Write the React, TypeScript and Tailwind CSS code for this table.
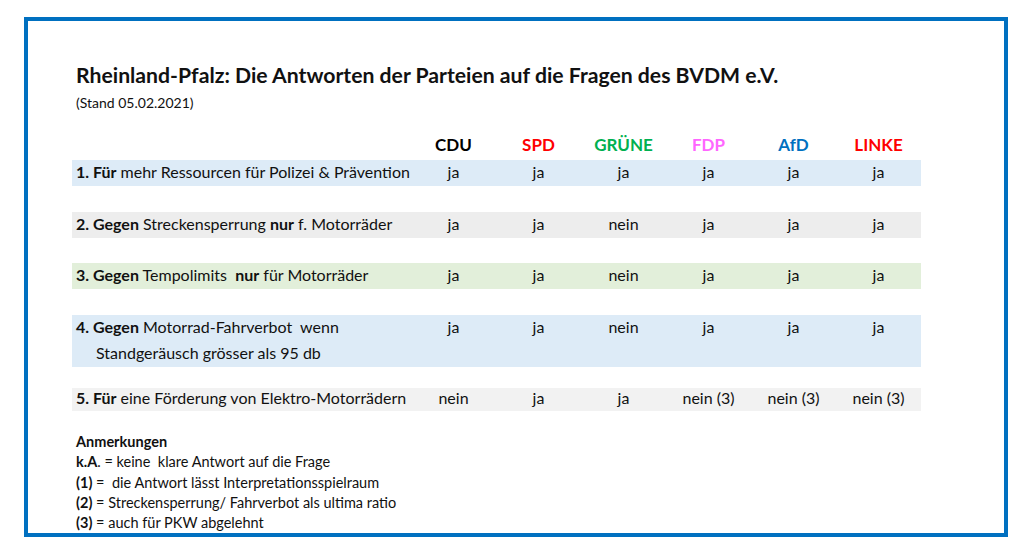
import React from "react";

type Row = {
  label: React.ReactNode;
  second?: string;
  answers: string[];
  bg: string;
  h: string;
  cell: string;
};

const parties = [
  { name: "CDU", color: "text-black" },
  { name: "SPD", color: "text-[#ff0000]" },
  { name: "GRÜNE", color: "text-[#00b050]" },
  { name: "FDP", color: "text-[#ff66ff]" },
  { name: "AfD", color: "text-[#0070c0]" },
  { name: "LINKE", color: "text-[#ff0000]" },
];

const rows: Row[] = [
  {
    label: (
      <>
        <b>1. Für</b> mehr Ressourcen für Polizei &amp; Prävention
      </>
    ),
    answers: ["ja", "ja", "ja", "ja", "ja", "ja"],
    bg: "bg-[#ddebf7]",
    h: "mt-0 h-[26px]",
    cell: "h-[26px]",
  },
  {
    label: (
      <>
        <b>2. Gegen</b> Streckensperrung <b>nur</b> f. Motorräder
      </>
    ),
    answers: ["ja", "ja", "nein", "ja", "ja", "ja"],
    bg: "bg-[#ededed]",
    h: "mt-[26px] h-[26px]",
    cell: "h-[26px]",
  },
  {
    label: (
      <>
        <b>3. Gegen</b> Tempolimits&nbsp; <b>nur</b> für Motorräder
      </>
    ),
    answers: ["ja", "ja", "nein", "ja", "ja", "ja"],
    bg: "bg-[#e2efda]",
    h: "mt-[25px] h-[26px]",
    cell: "h-[26px]",
  },
  {
    label: (
      <>
        <b>4. Gegen</b> Motorrad-Fahrverbot&nbsp; wenn
      </>
    ),
    second: "Standgeräusch grösser als 95 db",
    answers: ["ja", "ja", "nein", "ja", "ja", "ja"],
    bg: "bg-[#ddebf7]",
    h: "mt-[26px] h-[52px]",
    cell: "h-[26px]",
  },
  {
    label: (
      <>
        <b>5. Für</b> eine Förderung von Elektro-Motorrädern
      </>
    ),
    answers: ["nein", "ja", "ja", "nein (3)", "nein (3)", "nein (3)"],
    bg: "bg-[#f2f2f2]",
    h: "mt-[21px] h-[23px]",
    cell: "h-[22px]",
  },
];

export default function App() {
  return (
    <div className="w-[1025px] h-[558px] bg-white pt-[17px] pl-[24px] font-['Lato','Open_Sans',sans-serif] text-[#111]">
      <div className="w-[984px] h-[520px] border-4 border-[#0070c0] pl-[44px] pt-[42px]">
        <h1 className="pl-1 text-[21.2px] leading-[24px] font-bold whitespace-nowrap">
          Rheinland-Pfalz: Die Antworten der Parteien auf die Fragen des BVDM e.V.
        </h1>
        <p className="pl-1 mt-[7px] text-[14px] leading-[18px]">(Stand 05.02.2021)</p>

        <div className="w-[849px] mt-[20px]">
          <div className="flex h-[28px] items-start pt-[2px]">
            <div className="w-[339px]" />
            {parties.map((p) => (
              <div
                key={p.name}
                className={`w-[85px] text-center text-[17px] leading-[22px] font-bold ${p.color}`}
              >
                {p.name}
              </div>
            ))}
          </div>

          {rows.map((r, i) => (
            <div key={i} className={`flex text-[16px] ${r.bg} ${r.h}`}>
              <div className="w-[339px] pl-1">
                <div className={`${r.cell} -mt-[1px] flex items-center whitespace-nowrap`}>
                  <span>{r.label}</span>
                </div>
                {r.second && (
                  <div className="pl-5 h-[26px] flex items-center">{r.second}</div>
                )}
              </div>
              {r.answers.map((a, j) => (
                <div
                  key={j}
                  className={`w-[85px] ${r.cell} -mt-[1px] flex items-center justify-center`}
                >
                  {a}
                </div>
              ))}
            </div>
          ))}

          <div className="pl-1 mt-[21px] text-[14.5px] leading-[20.3px] whitespace-nowrap">
            <div className="font-bold">Anmerkungen</div>
            <div>
              <b>k.A</b>. = keine&nbsp; klare Antwort auf die Frage
            </div>
            <div>
              <b>(1)</b> =&nbsp; die Antwort lässt Interpretationsspielraum
            </div>
            <div>
              <b>(2)</b> = Streckensperrung/ Fahrverbot als ultima ratio
            </div>
            <div>
              <b>(3)</b> = auch für PKW abgelehnt
            </div>
          </div>
        </div>
      </div>
    </div>
  );
}
